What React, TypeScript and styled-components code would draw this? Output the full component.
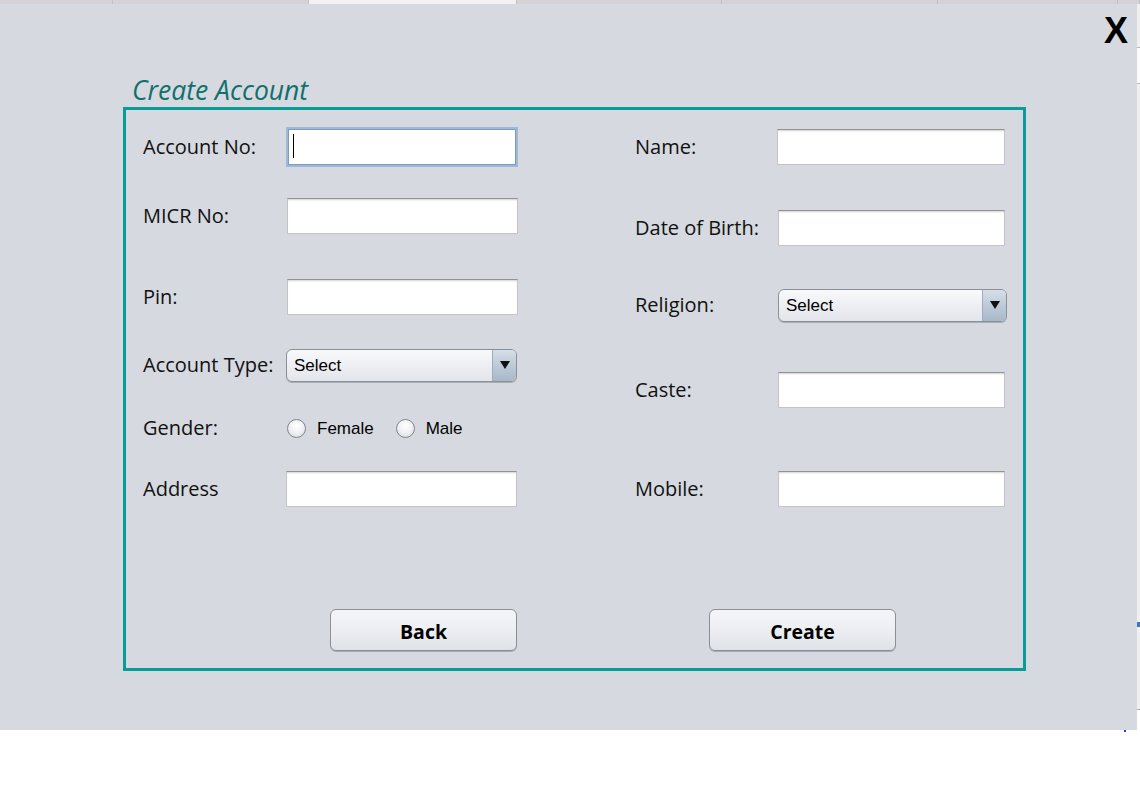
import React from "react";
import styled, { createGlobalStyle } from "styled-components";

const Global = createGlobalStyle`
  html, body { margin: 0; padding: 0; background: #ffffff; }
  body { font-family: "Open Sans", "Noto Sans", sans-serif; }
  * { box-sizing: border-box; }
`;

const Page = styled.div`
  width: 1140px;
  height: 794px;
  display: flex;
  flex-direction: column;
  overflow: hidden;
`;

const TopBar = styled.div`
  display: flex;
  height: 4px;
`;

const Tab = styled.div<{ $w: number; $active?: boolean }>`
  width: ${(p) => p.$w}px;
  height: 4px;
  background: ${(p) => (p.$active ? "#f1f1f2" : "#d3d3d7")};
  border-right: 1px solid #c2c2c6;
`;

const Main = styled.div`
  display: flex;
  height: 726px;
`;

const Panel = styled.div`
  width: 1137px;
  height: 726px;
  background: #d6d9df;
  display: flex;
  flex-direction: column;
  padding-left: 123px;
`;

const CloseRow = styled.div`
  height: 71px;
  display: flex;
  justify-content: flex-end;
  align-items: flex-start;
  padding: 6px 9px 0 0;
`;

const CloseX = styled.span`
  font-family: "Liberation Sans", Arial, sans-serif;
  font-weight: 700;
  font-size: 36px;
  line-height: 41px;
  color: #000;
  cursor: pointer;
`;

const Title = styled.h1`
  margin: 0 0 2px 9px;
  font-family: "Open Sans", "Noto Sans", sans-serif;
  font-style: italic;
  font-weight: 400;
  font-size: 26.5px;
  line-height: 30px;
  color: #0f706e;
`;

const Box = styled.div`
  width: 903px;
  height: 564px;
  border: 3px solid #089c98;
  display: flex;
  flex-direction: column;
  padding: 17px 0 17px 17px;
`;

const Columns = styled.div`
  display: grid;
  grid-template-columns: 492px 1fr;
`;

const Column = styled.div`
  display: flex;
  flex-direction: column;
`;

const Row = styled.div<{ $mt: number }>`
  display: flex;
  align-items: center;
  height: 40px;
  margin-top: ${(p) => p.$mt}px;
`;

const Label = styled.label`
  width: 143px;
  flex: none;
  font-size: 20px;
  color: #111;
  line-height: 26px;
`;

const FieldWrap = styled.div`
  position: relative;
  display: flex;
  align-items: center;
`;

const TextField = styled.input<{ $w: number; $focused?: boolean }>`
  width: ${(p) => p.$w}px;
  height: ${(p) => (p.$focused ? 40 : 36)}px;
  margin: 0;
  padding: 0 6px;
  background: #ffffff;
  outline: none;
  font-family: "Liberation Sans", Arial, sans-serif;
  font-size: 16px;
  ${(p) =>
    p.$focused
      ? `border: 2px solid #9fb8d6; box-shadow: inset 0 0 0 1px #7b9bc3;`
      : `border: 1px solid #c4c4c4; border-top-color: #929292; box-shadow: inset 0 2px 2px -1px rgba(0,0,0,0.18);`}
`;

const Caret = styled.span`
  position: absolute;
  left: 7px;
  top: 7px;
  width: 1px;
  height: 24px;
  background: #000;
`;

const SelectBox = styled.div<{ $w: number }>`
  width: ${(p) => p.$w}px;
  height: 33px;
  display: flex;
  align-items: stretch;
  border: 1px solid #8a8f98;
  border-radius: 6px;
  background: linear-gradient(#f8f9fb, #eceef2 55%, #e2e5ea);
  box-shadow: 0 1px 0 rgba(90, 95, 105, 0.35);
  overflow: hidden;
`;

const SelectText = styled.span`
  flex: 1;
  display: flex;
  align-items: center;
  padding: 2px 0 0 7px;
  font-family: "Liberation Sans", Arial, sans-serif;
  font-size: 17px;
  color: #000;
`;

const SelectArrow = styled.span`
  width: 24px;
  display: flex;
  align-items: center;
  justify-content: center;
  border-left: 1px solid #a1acb9;
  background: linear-gradient(#d6dee8, #b9c6d5 60%, #a9b8c9);
`;

const RadioOption = styled.label`
  display: flex;
  align-items: center;
  gap: 11px;
  margin-right: 21px;
  padding-top: 1px;
  font-family: "Liberation Sans", Arial, sans-serif;
  font-size: 17px;
  color: #000;
`;

const RadioCircle = styled.span`
  width: 19px;
  height: 19px;
  border-radius: 50%;
  border: 1px solid #80858d;
  background: radial-gradient(circle at 50% 35%, #ffffff 0%, #f1f2f5 45%, #d3d7de 100%);
  margin-left: 1px;
`;

const ButtonRow = styled.div`
  margin-top: auto;
  display: grid;
  grid-template-columns: 492px 1fr;
`;

const Button = styled.button<{ $offset: number }>`
  margin-left: ${(p) => p.$offset}px;
  width: 187px;
  height: 42px;
  border: 1px solid #8b8e94;
  border-radius: 6px;
  background: linear-gradient(#f4f5f8, #eceef2 50%, #dfe2e8);
  box-shadow: 0 1px 0 rgba(80, 85, 95, 0.35);
  font-family: "Open Sans", "Noto Sans", sans-serif;
  font-weight: 700;
  font-size: 19.5px;
  color: #000;
  padding: 2px 0 0;
  cursor: pointer;
`;

const RightStrip = styled.div`
  width: 3px;
  display: flex;
  flex-direction: column;
`;

const Seg = styled.div<{ $h: number; $bg: string }>`
  height: ${(p) => p.$h}px;
  background: ${(p) => p.$bg};
`;

const Bottom = styled.div`
  position: relative;
  flex: 1;
  background: #ffffff;
`;

const Dot = styled.span`
  position: absolute;
  left: 1124px;
  top: 0;
  width: 2px;
  height: 2px;
  background: #2b3cf0;
`;

const Arrow = () => (
  <svg width="10" height="8" viewBox="0 0 10 8">
    <polygon points="0,0 10,0 5,8" fill="#111" />
  </svg>
);

const Select = ({ w }: { w: number }) => (
  <SelectBox $w={w}>
    <SelectText>Select</SelectText>
    <SelectArrow>
      <Arrow />
    </SelectArrow>
  </SelectBox>
);

const tabs = [
  { w: 113 },
  { w: 196 },
  { w: 208, active: true },
  { w: 205 },
  { w: 216 },
  { w: 180 },
  { w: 22 },
];

const strip = [
  { h: 43, bg: "#f0f0f0" },
  { h: 1, bg: "#b8b8b8" },
  { h: 35, bg: "#fbfbfb" },
  { h: 1, bg: "#b8b8b8" },
  { h: 538, bg: "#f0f0f0" },
  { h: 5, bg: "#4275c4" },
  { h: 82, bg: "#f0f0f0" },
  { h: 1, bg: "#a8a8a8" },
  { h: 20, bg: "#ffffff" },
];

export default function App() {
  return (
    <Page>
      <Global />
      <TopBar>
        {tabs.map((t, i) => (
          <Tab key={i} $w={t.w} $active={t.active} />
        ))}
      </TopBar>
      <Main>
        <Panel>
          <CloseRow>
            <CloseX>X</CloseX>
          </CloseRow>
          <Title>Create Account</Title>
          <Box>
            <Columns>
              <Column>
                <Row $mt={0}>
                  <Label>Account No:</Label>
                  <FieldWrap>
                    <TextField $w={232} $focused />
                    <Caret />
                  </FieldWrap>
                </Row>
                <Row $mt={29}>
                  <Label>MICR No:</Label>
                  <TextField $w={231} style={{ marginLeft: 1 }} />
                </Row>
                <Row $mt={41}>
                  <Label>Pin:</Label>
                  <TextField $w={231} style={{ marginLeft: 1 }} />
                </Row>
                <Row $mt={28}>
                  <Label>Account Type:</Label>
                  <Select w={231} />
                </Row>
                <Row $mt={23}>
                  <Label>Gender:</Label>
                  <RadioOption>
                    <RadioCircle />
                    Female
                  </RadioOption>
                  <RadioOption>
                    <RadioCircle />
                    Male
                  </RadioOption>
                </Row>
                <Row $mt={21}>
                  <Label>Address</Label>
                  <TextField $w={231} />
                </Row>
              </Column>
              <Column>
                <Row $mt={0}>
                  <Label>Name:</Label>
                  <TextField $w={228} style={{ marginLeft: -1 }} />
                </Row>
                <Row $mt={41}>
                  <Label>Date of Birth:</Label>
                  <TextField $w={227} />
                </Row>
                <Row $mt={37}>
                  <Label>Religion:</Label>
                  <Select w={229} />
                </Row>
                <Row $mt={45}>
                  <Label>Caste:</Label>
                  <TextField $w={227} />
                </Row>
                <Row $mt={59}>
                  <Label>Mobile:</Label>
                  <TextField $w={227} />
                </Row>
              </Column>
            </Columns>
            <ButtonRow>
              <div>
                <Button $offset={187}>Back</Button>
              </div>
              <div>
                <Button $offset={74}>Create</Button>
              </div>
            </ButtonRow>
          </Box>
        </Panel>
        <RightStrip>
          {strip.map((s, i) => (
            <Seg key={i} $h={s.h} $bg={s.bg} />
          ))}
        </RightStrip>
      </Main>
      <Bottom>
        <Dot />
      </Bottom>
    </Page>
  );
}
